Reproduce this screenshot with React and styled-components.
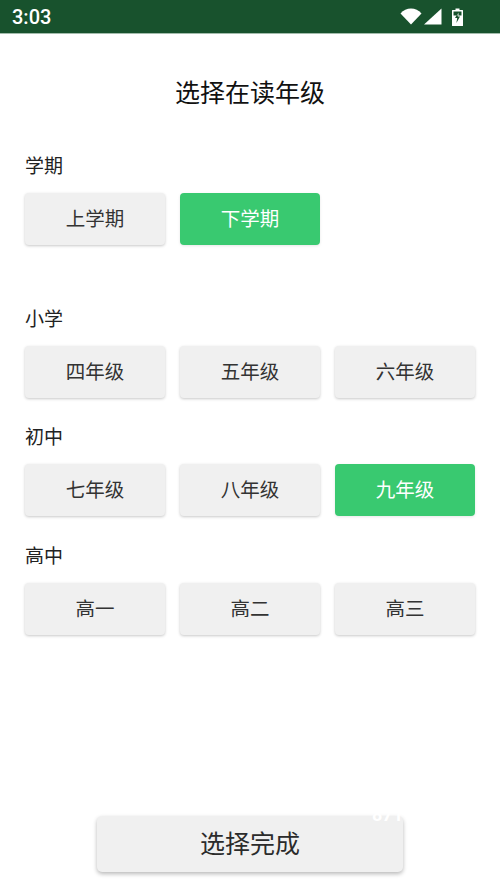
import React from 'react';
import styled, { createGlobalStyle } from 'styled-components';

const GlobalStyle = createGlobalStyle`
  html, body {
    margin: 0;
    padding: 0;
    background: #fff;
  }
  body {
    font-family: Roboto, "Noto Sans CJK SC", sans-serif;
  }
`;

const Screen = styled.div`
  width: 500px;
  height: 889px;
  display: flex;
  flex-direction: column;
  overflow: hidden;
  background: #fff;
`;

const StatusBar = styled.div`
  height: 33px;
  flex: none;
  display: flex;
  align-items: center;
  justify-content: space-between;
  padding: 0 37px 0 12px;
  background: #18522d;
  border-bottom: 1px solid #a3bcac;
  color: #fff;
  font-size: 20px;
  font-weight: 500;
`;

const StatusIcons = styled.div`
  display: flex;
  align-items: center;
  gap: 2px;
`;

const Content = styled.div`
  flex: 1;
  display: flex;
  flex-direction: column;
  padding: 0 25px 17px;
`;

const Title = styled.h1`
  margin: 42px 0 0;
  height: 36px;
  font-size: 25px;
  line-height: 36px;
  font-weight: 400;
  text-align: center;
  color: #111;
`;

const Section = styled.section`
  margin-top: ${p => p.$gap}px;
`;

const Label = styled.div`
  font-size: 19px;
  line-height: 28px;
  color: #222;
`;

const Row = styled.div`
  margin-top: 12px;
  display: grid;
  grid-template-columns: repeat(3, 140px);
  column-gap: 15px;
`;

const Choice = styled.div`
  height: 52px;
  padding-bottom: 3px;
  box-sizing: border-box;
  display: flex;
  align-items: center;
  justify-content: center;
  border-radius: 4px;
  font-size: 19.5px;
  background: ${p => (p.$active ? '#39c970' : '#f0f0f0')};
  color: ${p => (p.$active ? '#fff' : '#333')};
  box-shadow: 0 1px 3px rgba(0, 0, 0, ${p => (p.$active ? 0.1 : 0.22)});
`;

const Footer = styled.div`
  margin-top: auto;
  display: flex;
  justify-content: center;
`;

const Done = styled.div`
  position: relative;
  width: 306px;
  height: 56px;
  padding-bottom: 5px;
  box-sizing: border-box;
  display: flex;
  align-items: center;
  justify-content: center;
  border-radius: 5px;
  background: #f0f0f0;
  color: #2b2b2b;
  font-size: 25px;
  box-shadow: 0 2px 4px rgba(0, 0, 0, 0.28);
`;

// white stamp text from the capture, only its lower edge shows on the button
const Stamp = styled.span`
  position: absolute;
  top: -10px;
  right: 0;
  font-size: 18px;
  line-height: 18px;
  font-weight: 700;
  color: #fff;
`;

const groups = [
  { label: '学期', gap: 41, items: ['上学期', '下学期'], active: '下学期' },
  { label: '小学', gap: 61, items: ['四年级', '五年级', '六年级'] },
  { label: '初中', gap: 26, items: ['七年级', '八年级', '九年级'], active: '九年级' },
  { label: '高中', gap: 27, items: ['高一', '高二', '高三'] },
];

const WifiIcon = () => (
  <svg width="22" height="17" viewBox="0 0 22 17">
    <path d="M0.5 5.5C3.4 2.3 7 0.5 11 0.5s7.6 1.8 10.5 5L11 16.5z" fill="#fff" />
  </svg>
);

const SignalIcon = () => (
  <svg width="18" height="17" viewBox="0 0 18 17">
    <path d="M0 16.5L17.5 0.5v16z" fill="#fff" />
  </svg>
);

const BatteryIcon = () => (
  <svg width="11" height="18" viewBox="0 0 11 18" style={{ marginLeft: 8 }}>
    <path
      fillRule="evenodd"
      d="M3.5 0.5h4v1.5H10.5a0.5 0.5 0 0 1 0.5 0.5v15a0.5 0.5 0 0 1-0.5 0.5h-10a0.5 0.5 0 0 1-0.5-0.5v-15a0.5 0.5 0 0 1 0.5-0.5h3zM1.5 3.5v4h8v-4z"
      fill="#fff"
    />
    <path d="M6.5 4L3 10h2.2L4.4 15 8 8.5H5.8z" fill="#18522d" />
    <path d="M6.3 4.5L5.2 7.5h1.4z" fill="#fff" />
  </svg>
);

const App = () => {
  return (
    <Screen>
      <GlobalStyle />
      <StatusBar>
        <span>3:03</span>
        <StatusIcons>
          <WifiIcon />
          <SignalIcon />
          <BatteryIcon />
        </StatusIcons>
      </StatusBar>
      <Content>
        <Title>选择在读年级</Title>
        {groups.map(group => (
          <Section key={group.label} $gap={group.gap}>
            <Label>{group.label}</Label>
            <Row>
              {group.items.map(item => (
                <Choice key={item} $active={item === group.active}>
                  {item}
                </Choice>
              ))}
            </Row>
          </Section>
        ))}
        <Footer>
          <Done>
            选择完成
            <Stamp>871</Stamp>
          </Done>
        </Footer>
      </Content>
    </Screen>
  );
};

export default App;
